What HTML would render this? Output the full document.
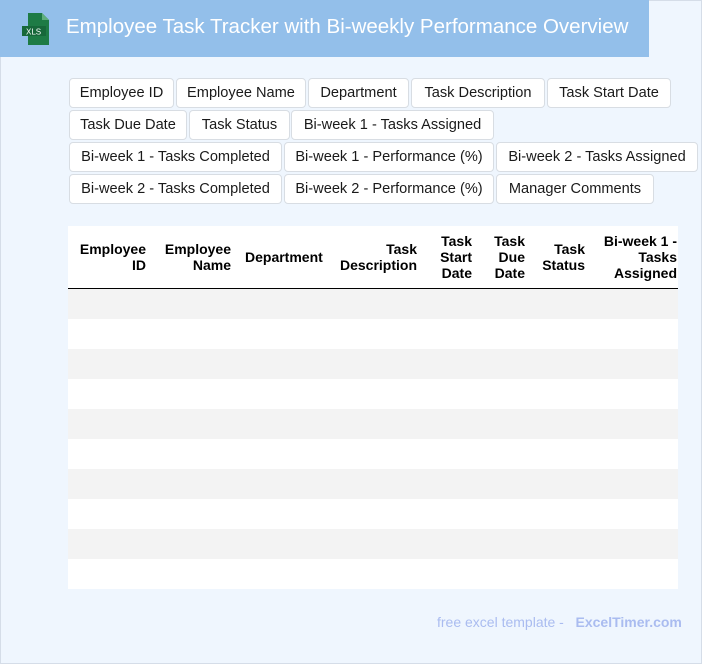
<!DOCTYPE html>
<html><head><meta charset="utf-8"><style>
*{margin:0;padding:0;box-sizing:border-box}
body{width:702px;height:664px;background:#eff6fe;font-family:"Liberation Sans",sans-serif;position:relative;overflow:hidden}
.bd{position:absolute;left:0;top:0;width:702px;height:664px;border:1px solid #d5dde8}
.hdr{position:absolute;left:0;top:0;width:649px;height:57px;background:#93bfea}
.hdr h1{position:absolute;left:66px;top:15px;font-size:20.5px;font-weight:normal;color:#fff;white-space:nowrap}
.tag{position:absolute;height:30px;background:#fff;border:1px solid #d8dde3;border-radius:4px;font-size:14.6px;color:#1a1a1a;line-height:28px;text-align:center;white-space:nowrap}
.tbl{position:absolute;left:68px;top:226px;width:610px;height:363px;background:#fff}
.h{position:absolute;font-weight:bold;font-size:14px;line-height:16px;color:#000;text-align:right}
.row{position:absolute;left:0;width:610px;height:30px}
.foot{position:absolute;top:614px;left:437px;font-size:14px;color:#aabcf0;white-space:nowrap}
</style></head><body>
<div class="bd"></div>
<div class="hdr">
<svg style="position:absolute;left:22px;top:13px" width="28" height="32" viewBox="0 0 28 32">
<path d="M6 0h14l7 7v25H6z" fill="#1e7b45"/><path d="M20 0v7h7z" fill="#5fae7d"/>
<rect x="0" y="13" width="24" height="10" fill="#17683a"/>
<text x="4" y="21.5" font-size="8" fill="#fff" font-family="Liberation Sans">XLS</text></svg>
<h1>Employee Task Tracker with Bi-weekly Performance Overview</h1></div>

<div class="tag" style="left:69px;top:78px;width:105px">Employee ID</div>
<div class="tag" style="left:176px;top:78px;width:130px">Employee Name</div>
<div class="tag" style="left:308px;top:78px;width:101px">Department</div>
<div class="tag" style="left:411px;top:78px;width:134px">Task Description</div>
<div class="tag" style="left:547px;top:78px;width:124px">Task Start Date</div>
<div class="tag" style="left:69px;top:110px;width:118px">Task Due Date</div>
<div class="tag" style="left:189px;top:110px;width:101px">Task Status</div>
<div class="tag" style="left:291px;top:110px;width:203px">Bi-week 1 - Tasks Assigned</div>
<div class="tag" style="left:69px;top:142px;width:213px">Bi-week 1 - Tasks Completed</div>
<div class="tag" style="left:284px;top:142px;width:210px">Bi-week 1 - Performance (%)</div>
<div class="tag" style="left:496px;top:142px;width:202px">Bi-week 2 - Tasks Assigned</div>
<div class="tag" style="left:69px;top:174px;width:213px">Bi-week 2 - Tasks Completed</div>
<div class="tag" style="left:284px;top:174px;width:210px">Bi-week 2 - Performance (%)</div>
<div class="tag" style="left:496px;top:174px;width:158px">Manager Comments</div>

<div class="tbl">
<div class="h" style="right:532px;top:15px">Employee<br>ID</div>
<div class="h" style="right:447px;top:15px">Employee<br>Name</div>
<div class="h" style="left:177px;top:23px">Department</div>
<div class="h" style="right:261px;top:15px">Task<br>Description</div>
<div class="h" style="right:206px;top:7px">Task<br>Start<br>Date</div>
<div class="h" style="right:153px;top:7px">Task<br>Due<br>Date</div>
<div class="h" style="right:93px;top:15px">Task<br>Status</div>
<div class="h" style="right:1px;top:7px">Bi-week 1 -<br>Tasks<br>Assigned</div>
<div style="position:absolute;left:0;top:62px;width:610px;height:1px;background:#000"></div>
<div class="row" style="top:63px;background:#f3f3f3"></div>
<div class="row" style="top:123px;background:#f3f3f3"></div>
<div class="row" style="top:183px;background:#f3f3f3"></div>
<div class="row" style="top:243px;background:#f3f3f3"></div>
<div class="row" style="top:303px;background:#f3f3f3"></div>
</div>
<div class="foot">free excel template - &nbsp;&nbsp;<b>ExcelTimer.com</b></div>
</body></html>
